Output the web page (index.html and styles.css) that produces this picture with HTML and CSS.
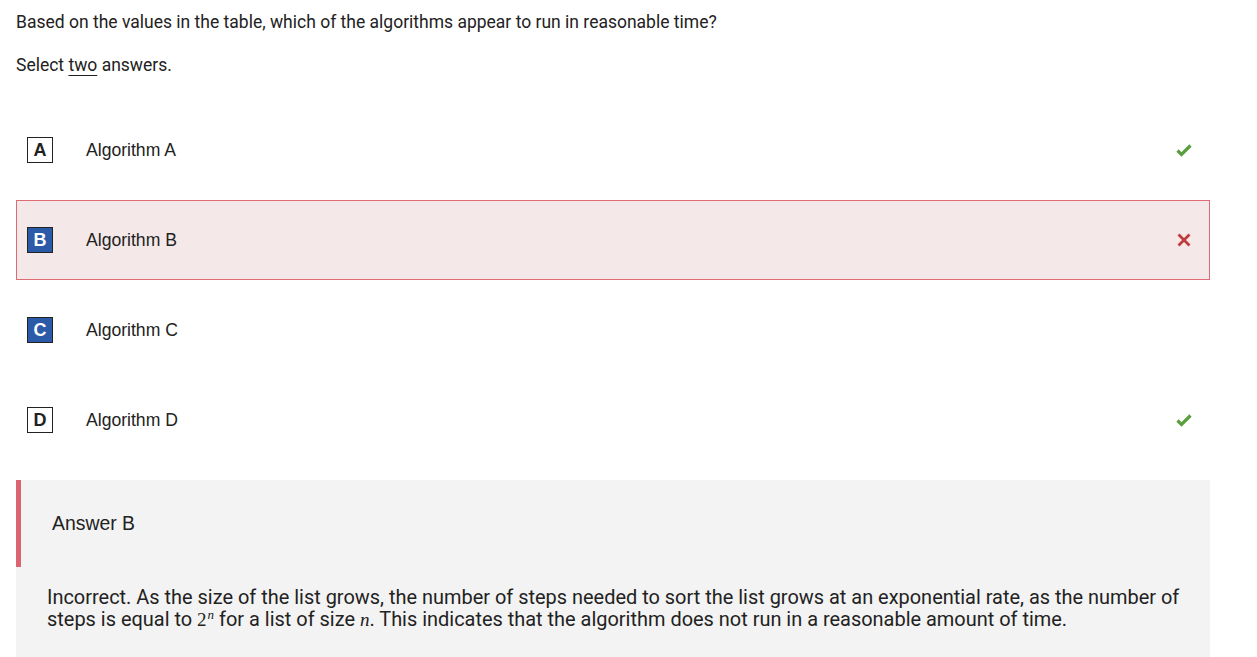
FILE: index.html
```html
<!DOCTYPE html>
<html>
<head>
<meta charset="utf-8">
<link rel="stylesheet" href="styles.css">
</head>
<body>
<div class="page">
  <p class="question">Based on the values in the table, which of the algorithms appear to run in reasonable time?</p>
  <p class="instruction">Select <u>two</u> answers.</p>
  <div class="options">
    <div class="option">
      <span class="letter">A</span>
      <span class="label">Algorithm A</span>
      <span class="mark"><svg width="16" height="13" viewBox="0 0 16 13"><path d="M1.5 6.5 L5.5 10.5 L14.5 1.5" fill="none" stroke="#5a9f3e" stroke-width="3.2"/></svg></span>
    </div>
    <div class="option wrong">
      <span class="letter filled">B</span>
      <span class="label">Algorithm B</span>
      <span class="mark"><svg width="14" height="14" viewBox="0 0 14 14"><path d="M1.5 1.5 L12.5 12.5 M12.5 1.5 L1.5 12.5" fill="none" stroke="#c23b3b" stroke-width="2.8"/></svg></span>
    </div>
    <div class="option">
      <span class="letter filled">C</span>
      <span class="label">Algorithm C</span>
      <span class="mark"></span>
    </div>
    <div class="option">
      <span class="letter">D</span>
      <span class="label">Algorithm D</span>
      <span class="mark"><svg width="16" height="13" viewBox="0 0 16 13"><path d="M1.5 6.5 L5.5 10.5 L14.5 1.5" fill="none" stroke="#5a9f3e" stroke-width="3.2"/></svg></span>
    </div>
  </div>
  <div class="feedback">
    <div class="feedback-head">Answer B</div>
    <p class="feedback-body">Incorrect. As the size of the list grows, the number of steps needed to sort the list grows at an exponential rate, as the number of steps is equal to <span class="math">2<span class="sup">n</span></span> for a list of size <span class="math var">n</span>. This indicates that the algorithm does not run in a reasonable amount of time.</p>
  </div>
</div>
</body>
</html>
```
FILE: styles.css
```css
html, body {
  margin: 0;
  padding: 0;
  background: #ffffff;
}
.page {
  padding: 0 47px 0 16px;
  font-family: Roboto, "Liberation Sans", sans-serif;
  color: #222;
}
.question {
  margin: 0;
  padding-top: 12px;
  font-size: 17.5px;
  line-height: 20px;
}
.instruction {
  margin: 23px 0 0 0;
  font-size: 17.5px;
  line-height: 20px;
}
.instruction u {
  text-decoration-thickness: 1px;
  text-underline-offset: 4px;
}
.options {
  margin-top: 35px;
  display: flex;
  flex-direction: column;
  gap: 10px;
}
.option {
  height: 80px;
  box-sizing: border-box;
  border: 1px solid transparent;
  display: flex;
  align-items: center;
  padding-left: 10px;
  font-family: "Liberation Sans", Arial, sans-serif;
}
.option.wrong {
  background: #f4e8e8;
  border-color: #de6b74;
}
.letter {
  width: 26px;
  height: 26px;
  box-sizing: border-box;
  border: 1px solid #222;
  display: flex;
  align-items: center;
  justify-content: center;
  font-weight: bold;
  font-size: 18px;
  color: #222;
}
.letter.filled {
  background: #2b5ba8;
  color: #fff;
}
.label {
  margin-left: 33px;
  font-size: 17.6px;
  color: #222;
  flex: 1;
}
.mark {
  width: 16px;
  margin-right: 17px;
  display: flex;
  align-items: center;
  justify-content: center;
}
.feedback {
  margin-top: 20px;
  background: #f3f3f3;
  padding-bottom: 30px;
}
.feedback-head {
  height: 87px;
  border-left: 5px solid #dc6470;
  box-sizing: border-box;
  padding-left: 31px;
  display: flex;
  align-items: center;
  font-family: "Liberation Sans", Arial, sans-serif;
  font-size: 19.4px;
  color: #222;
}
.feedback-body {
  margin: 20px 0 0 0;
  padding: 0 25px 0 31px;
  font-size: 19.95px;
  line-height: 21px;
  color: #222;
}
.math {
  font-family: "Liberation Serif", "DejaVu Serif", serif;
  font-size: 19px;
  line-height: 1;
}
.math .sup {
  font-size: 13px;
  font-style: italic;
  vertical-align: 7px;
  line-height: 1;
  margin-left: 1px;
}
.math.var {
  font-style: italic;
}
```
